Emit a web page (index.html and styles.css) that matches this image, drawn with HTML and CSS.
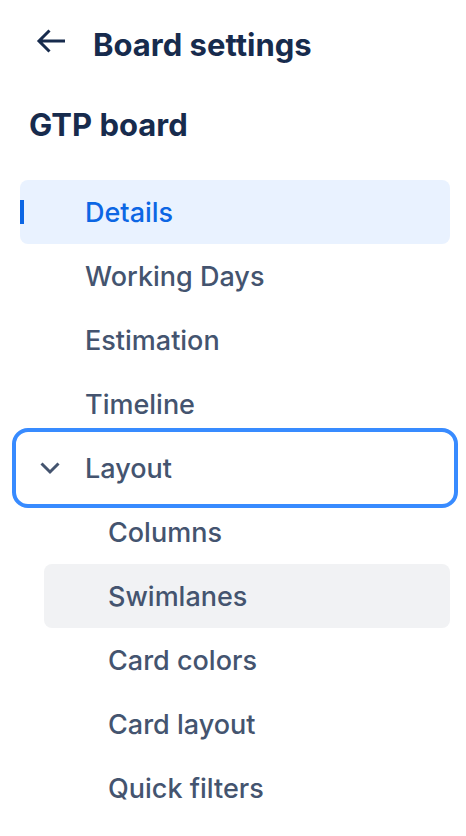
FILE: index.html
```html
<!DOCTYPE html>
<html>
<head>
<meta charset="utf-8">
<link rel="stylesheet" href="styles.css">
</head>
<body>
<div class="sidebar">
  <div class="header">
    <button class="back" aria-label="Back">
      <svg width="32" height="32" viewBox="0 0 32 32"><path d="M3 13H29M13.5 2.5L3 13L13.5 23.5" fill="none" stroke="#172b4d" stroke-width="3"/></svg>
    </button>
    <h1 class="header-title">Board settings</h1>
  </div>
  <h2 class="board-name">GTP board</h2>
  <nav class="nav">
    <a class="item selected"><span class="indicator"></span>Details</a>
    <a class="item">Working Days</a>
    <a class="item">Estimation</a>
    <a class="item">Timeline</a>
    <a class="item group focused">
      <span class="chev"><svg width="24" height="24" viewBox="0 0 24 24"><path d="M3.5 7.5L12 16L20.5 7.5" fill="none" stroke="#44546f" stroke-width="3"/></svg></span>Layout
    </a>
    <div class="sub">
      <a class="item">Columns</a>
      <a class="item hover">Swimlanes</a>
      <a class="item">Card colors</a>
      <a class="item">Card layout</a>
      <a class="item">Quick filters</a>
    </div>
  </nav>
</div>
</body>
</html>
```
FILE: styles.css
```css
html, body {
  margin: 0;
  padding: 0;
  background: #ffffff;
}
body {
  font-family: Inter, "Noto Sans", sans-serif;
  color: #172b4d;
}
.sidebar {
  width: 466px;
}
.header {
  display: flex;
  align-items: center;
  height: 88px;
  padding-left: 36px;
  gap: 25px;
}
.back {
  width: 32px;
  height: 32px;
  padding: 0;
  border: 0;
  background: none;
  display: flex;
}
.header-title {
  margin: 0;
  font-size: 31px;
  font-weight: 700;
  color: #172b4d;
  letter-spacing: 0;
}
.board-name {
  margin: 0;
  height: 72px;
  line-height: 74px;
  padding-left: 29px;
  font-size: 31px;
  font-weight: 700;
  color: #172b4d;
}
.nav {
  margin-top: 20px;
  margin-left: 20px;
  width: 430px;
  display: flex;
  flex-direction: column;
}
.item {
  position: relative;
  display: flex;
  align-items: center;
  height: 64px;
  padding-left: 65px;
  font-size: 27px;
  font-weight: 500;
  color: #44546f;
  border-radius: 8px;
  box-sizing: border-box;
}
.item.selected {
  background: #e9f2ff;
  color: #0c66e4;
}
.indicator {
  position: absolute;
  left: 0;
  top: 20px;
  width: 4px;
  height: 24px;
  background: #0c66e4;
}
.item.group {
  padding-left: 18px;
}
.chev {
  display: flex;
  width: 24px;
  height: 24px;
  margin-right: 23px;
}
.item.focused {
  outline: 4px solid #388bff;
  outline-offset: 4px;
}
.sub {
  margin-left: 24px;
  display: flex;
  flex-direction: column;
}
.sub .item {
  padding-left: 64px;
}
.item.hover {
  background: #f1f2f4;
}
```
